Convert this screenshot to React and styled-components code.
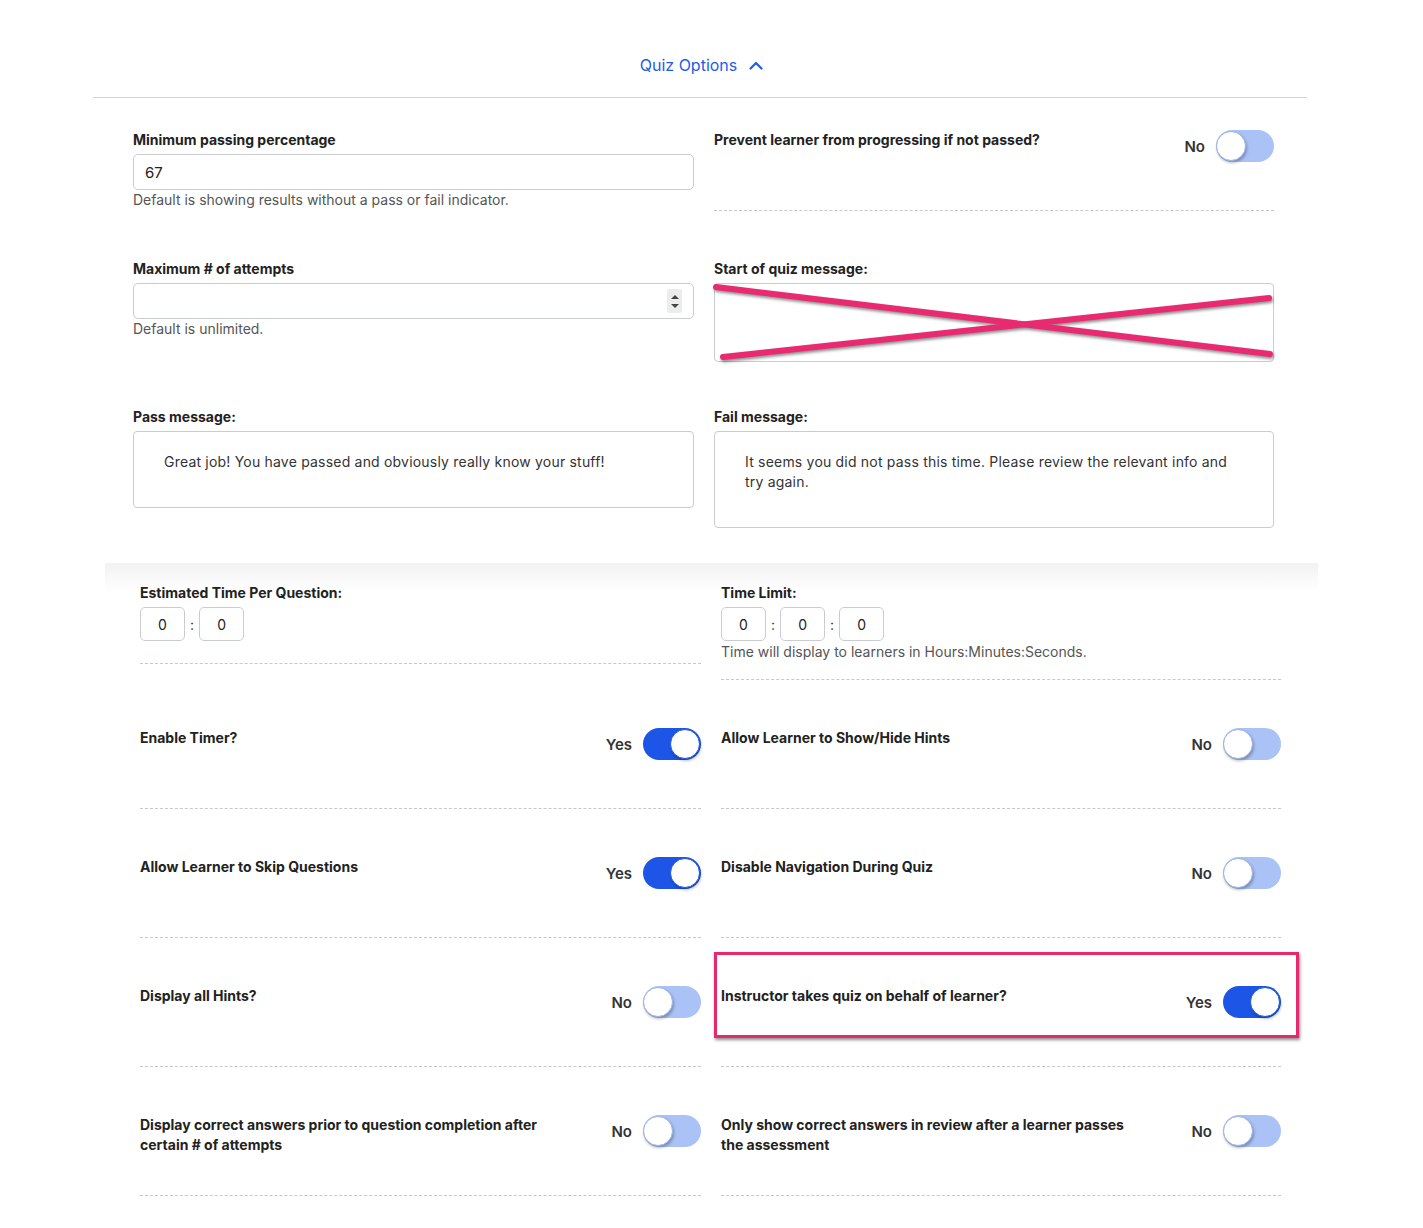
import styled, { createGlobalStyle } from 'styled-components';

const GlobalStyle = createGlobalStyle`
  * { box-sizing: border-box; }
  body {
    margin: 0;
    background: #fff;
    font-family: Inter, "Noto Sans", sans-serif;
    color: #222;
  }
`;

const TopPanel = styled.section`
  margin-left: 93px;
  width: 1214px;
`;

const Header = styled.div`
  display: flex;
  justify-content: center;
  padding: 54px 0 21px;
  border-bottom: 1px solid #d3d3d3;
`;

const HeaderButton = styled.div`
  display: flex;
  align-items: center;
  gap: 12px;
  font-size: 16px;
  line-height: 22px;
  color: #1f5ce8;
  padding-left: 3px;
`;

const Grid = styled.div`
  display: grid;
  grid-template-columns: 561px 560px;
  column-gap: 20px;
  align-items: start;
  padding: ${p => p.$pad};
`;

const Field = styled.div`
  display: flex;
  flex-direction: column;
  margin-bottom: ${p => p.$mb || 0}px;
`;

const Label = styled.div`
  font-size: 14px;
  font-weight: 700;
  line-height: 20px;
  color: #222;
  max-width: ${p => p.$max || 'none'};
`;

const Hint = styled.div`
  font-size: 14px;
  line-height: 20px;
  color: #555;
  margin-top: ${p => p.$mt || 0}px;
`;

const TextInput = styled.div`
  margin-top: 4px;
  height: 36px;
  border: 1px solid #c9ccd1;
  border-radius: 5px;
  padding: 0 11px 0 11px;
  display: flex;
  align-items: center;
  justify-content: space-between;
  font-size: 15px;
  color: #222;
`;

const Spinner = styled.div`
  width: 15px;
  height: 24px;
  background: #ececec;
  border-radius: 2px;
  display: flex;
  flex-direction: column;
  align-items: center;
  justify-content: center;
  gap: 5px;
`;

const Arrow = styled.span`
  width: 0;
  height: 0;
  border-left: 4px solid transparent;
  border-right: 4px solid transparent;
  ${p => (p.$down ? 'border-top: 4px solid #444;' : 'border-bottom: 4px solid #444;')}
`;

const MessageBox = styled.div`
  position: relative;
  margin-top: 4px;
  min-height: ${p => p.$h}px;
  border: 1px solid #c9ccd1;
  border-radius: 4px;
  padding: 20px 30px;
  font-size: 14px;
  line-height: 20px;
  letter-spacing: 0.2px;
  color: #333;
`;

const Strike = styled.svg`
  position: absolute;
  left: 0;
  top: 0;
  overflow: visible;
  pointer-events: none;
  filter: drop-shadow(1px 2px 1.5px rgba(0, 0, 0, 0.45));
`;

const ToggleCell = styled.div`
  position: relative;
  display: flex;
  align-items: flex-start;
  justify-content: space-between;
  height: ${p => p.$h}px;
  padding-top: ${p => p.$top}px;
  margin-bottom: ${p => p.$mb || 0}px;
  border-bottom: 1px dashed #c8c8c8;
`;

const SwitchGroup = styled.div`
  display: flex;
  align-items: center;
  gap: 11px;
  flex-shrink: 0;
`;

const StateText = styled.span`
  font-size: 15px;
  font-weight: 600;
  color: #333;
`;

const Track = styled.div`
  position: relative;
  width: 58px;
  height: 32px;
  border-radius: 16px;
  background: ${p => (p.$on ? '#1d56e6' : '#aac2f6')};
`;

const Knob = styled.span`
  position: absolute;
  top: 1px;
  ${p => (p.$on ? 'right: 1px;' : 'left: 0px;')}
  width: 30px;
  height: 30px;
  border-radius: 50%;
  background: #fff;
  border: 1px solid ${p => (p.$on ? '#1d56e6' : '#9ab3ea')};
  box-shadow: 1px 2px 3px rgba(0, 0, 0, 0.28);
`;

const Highlight = styled.div`
  position: absolute;
  left: -7px;
  top: 14px;
  width: 585px;
  height: 86px;
  border: 3px solid #e6296d;
  box-shadow: 1px 2px 3px rgba(0, 0, 0, 0.45);
  pointer-events: none;
`;

const BottomPanel = styled.section`
  margin-left: 105px;
  width: 1213px;
  background: linear-gradient(#f2f2f2, #fff 28px);
`;

const TimeCell = styled.div`
  padding-bottom: ${p => p.$pb}px;
  border-bottom: 1px dashed #c8c8c8;
`;

const TimeRow = styled.div`
  display: flex;
  align-items: center;
  gap: 5px;
  margin-top: 4px;
`;

const TimeBox = styled.div`
  width: 45px;
  height: 34px;
  border: 1px solid #c9ccd1;
  border-radius: 5px;
  display: flex;
  align-items: center;
  justify-content: center;
  font-size: 14px;
  color: #222;
`;

const Colon = styled.span`
  font-size: 14px;
  color: #333;
`;

function Switch({ on }) {
  return (
    <SwitchGroup>
      <StateText>{on ? 'Yes' : 'No'}</StateText>
      <Track $on={on}>
        <Knob $on={on} />
      </Track>
    </SwitchGroup>
  );
}

function Time({ count }) {
  const boxes = [];
  for (let i = 0; i < count; i++) {
    if (i > 0) boxes.push(<Colon key={'c' + i}>:</Colon>);
    boxes.push(<TimeBox key={i}>0</TimeBox>);
  }
  return <TimeRow>{boxes}</TimeRow>;
}

const toggles = [
  ['Enable Timer?', true, 'Allow Learner to Show/Hide Hints', false],
  ['Allow Learner to Skip Questions', true, 'Disable Navigation During Quiz', false],
  ['Display all Hints?', false, 'Instructor takes quiz on behalf of learner?', true],
  [
    'Display correct answers prior to question completion after certain # of attempts',
    false,
    'Only show correct answers in review after a learner passes the assessment',
    false,
  ],
];

export default function App() {
  return (
    <>
      <GlobalStyle />
      <TopPanel>
        <Header>
          <HeaderButton>
            Quiz Options
            <svg width="14" height="9" viewBox="0 0 14 9">
              <polyline points="1.5,7.5 7,2 12.5,7.5" fill="none" stroke="#1f5ce8" strokeWidth="2.2" strokeLinecap="round" strokeLinejoin="round" />
            </svg>
          </HeaderButton>
        </Header>

        <Grid $pad="32px 33px 35px 40px">
          <Field $mb={48}>
            <Label>Minimum passing percentage</Label>
            <TextInput>67</TextInput>
            <Hint>Default is showing results without a pass or fail indicator.</Hint>
          </Field>
          <ToggleCell $top={0} $h={81} $mb={48}>
            <Label>Prevent learner from progressing if not passed?</Label>
            <Switch on={false} />
          </ToggleCell>

          <Field $mb={45}>
            <Label>Maximum # of attempts</Label>
            <TextInput>
              <span />
              <Spinner>
                <Arrow />
                <Arrow $down />
              </Spinner>
            </TextInput>
            <Hint>Default is unlimited.</Hint>
          </Field>
          <Field $mb={45}>
            <Label>Start of quiz message:</Label>
            <MessageBox $h={79}>
              <Strike width="560" height="79">
                <line x1="1" y1="3" x2="555" y2="70" stroke="#ea2a70" strokeWidth="6" strokeLinecap="round" />
                <line x1="8" y1="73" x2="554" y2="14" stroke="#ea2a70" strokeWidth="6" strokeLinecap="round" />
              </Strike>
            </MessageBox>
          </Field>

          <Field>
            <Label>Pass message:</Label>
            <MessageBox $h={77}>Great job! You have passed and obviously really know your stuff!</MessageBox>
          </Field>
          <Field>
            <Label>Fail message:</Label>
            <MessageBox $h={97}>
              It seems you did not pass this time. Please review the relevant info and try again.
            </MessageBox>
          </Field>
        </Grid>
      </TopPanel>

      <BottomPanel>
        <Grid $pad="20px 37px 0 35px">
          <TimeCell $pb={22}>
            <Label>Estimated Time Per Question:</Label>
            <Time count={2} />
          </TimeCell>
          <TimeCell $pb={17}>
            <Label>Time Limit:</Label>
            <Time count={3} />
            <Hint $mt={1}>Time will display to learners in Hours:Minutes:Seconds.</Hint>
          </TimeCell>

          {toggles.map(([left, leftOn, right, rightOn]) => [
            <ToggleCell key={left} $top={48} $h={129}>
              <Label $max="415px">{left}</Label>
              <Switch on={leftOn} />
            </ToggleCell>,
            <ToggleCell key={right} $top={48} $h={129}>
              <Label $max="415px">{right}</Label>
              <Switch on={rightOn} />
              {right.startsWith('Instructor') && <Highlight />}
            </ToggleCell>,
          ])}
        </Grid>
      </BottomPanel>
    </>
  );
}
